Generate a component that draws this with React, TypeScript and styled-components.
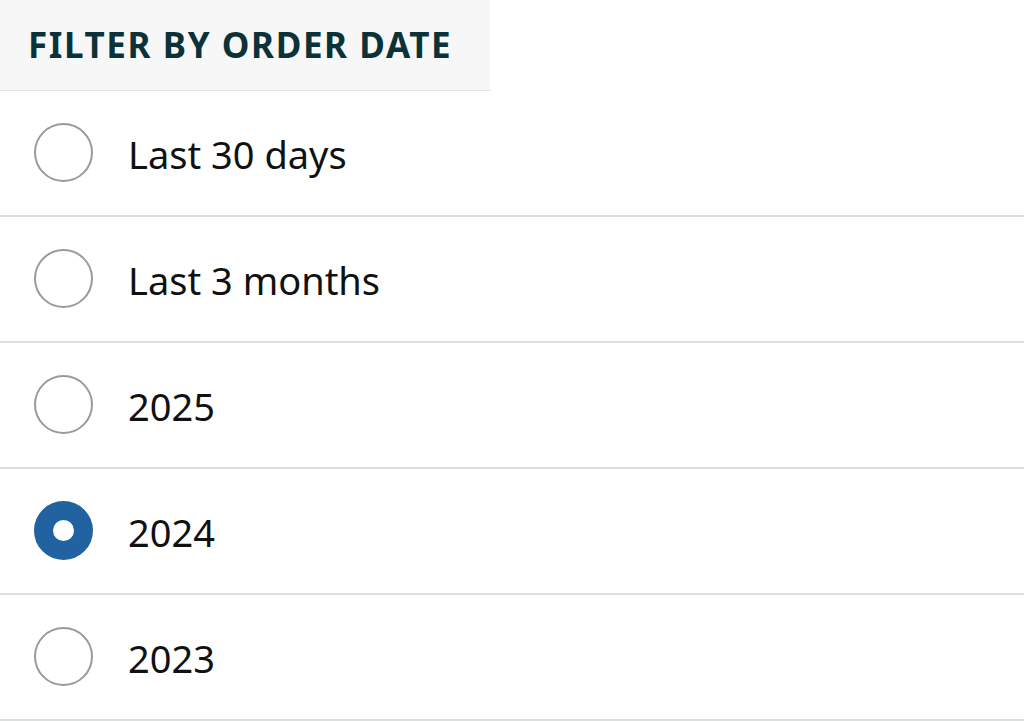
import React, { useState } from 'react';
import styled, { createGlobalStyle } from 'styled-components';

const GlobalStyle = createGlobalStyle`
  html, body {
    margin: 0;
    padding: 0;
    background: #ffffff;
  }
  body {
    font-family: 'Noto Sans', 'Liberation Sans', sans-serif;
    -webkit-font-smoothing: antialiased;
  }
`;

const OPTIONS = ['Last 30 days', 'Last 3 months', '2025', '2024', '2023'];

const Panel = styled.section`
  display: flex;
  flex-direction: column;
  width: 1024px;
`;

const Header = styled.header`
  display: flex;
  align-items: center;
  box-sizing: border-box;
  width: 490px;
  height: 91px;
  padding: 0 28px 2px;
  background-color: #f7f7f7;
  border-bottom: 1px solid #e3e6e6;
`;

const HeaderTitle = styled.h2`
  margin: 0;
  font-size: 35px;
  font-weight: 700;
  letter-spacing: 1.6px;
  color: #0b3238;
`;

const List = styled.div`
  display: flex;
  flex-direction: column;
`;

const Row = styled.label`
  display: flex;
  align-items: center;
  gap: 35px;
  box-sizing: border-box;
  height: 126px;
  padding: 0 0 2px 34px;
  border-bottom: 2px solid #dddfdf;
  cursor: pointer;
`;

const Radio = styled.span<{ checked: boolean }>`
  flex-shrink: 0;
  box-sizing: border-box;
  width: 59px;
  height: 59px;
  border-radius: 50%;
  background-color: #ffffff;
  border: ${({ checked }) => (checked ? '19px solid #2162a1' : '2px solid #9a9a9a')};
`;

const Label = styled.span`
  padding-top: 4px;
  font-size: 38px;
  color: #111111;
`;

const App = () => {
  const [selected, setSelected] = useState('2024');

  return (
    <>
      <GlobalStyle />
      <Panel>
        <Header>
          <HeaderTitle>FILTER BY ORDER DATE</HeaderTitle>
        </Header>
        <List role="radiogroup">
          {OPTIONS.map((option) => (
            <Row key={option} onClick={() => setSelected(option)}>
              <Radio checked={selected === option} role="radio" aria-checked={selected === option} />
              <Label>{option}</Label>
            </Row>
          ))}
        </List>
      </Panel>
    </>
  );
};

export default App;
